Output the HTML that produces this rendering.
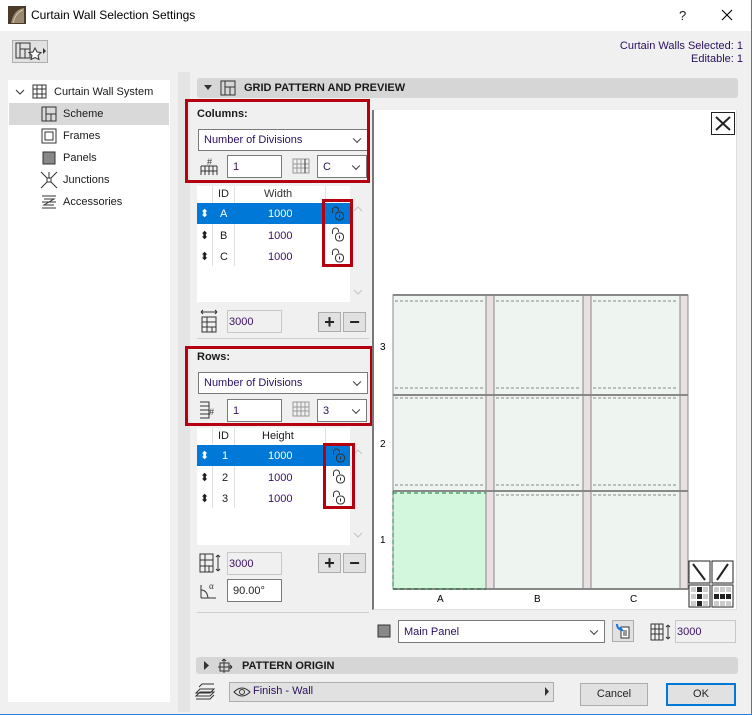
<!DOCTYPE html>
<html><head><meta charset="utf-8"><style>
*{box-sizing:border-box;margin:0;padding:0}
body{width:752px;height:715px;position:relative;overflow:hidden;background:#f0f0f0;font-family:"Liberation Sans",sans-serif;font-size:11px;color:#1a1a1a}
.a{position:absolute}
.tb{left:0;top:0;width:752px;height:31px;background:#fff}
.inp{position:absolute;background:#fff;border:1px solid #7a7a7a;padding:0 0 0 5px;display:flex;align-items:center;color:#3a1060}
.dd{position:absolute;background:#fff;border:1px solid #7a7a7a;padding-left:5px;display:flex;align-items:center;color:#2a1060}
.dd:after{content:"";position:absolute;right:7px;top:50%;width:5px;height:5px;border-right:1px solid #333;border-bottom:1px solid #333;transform:translateY(-70%) rotate(45deg)}
.red{position:absolute;border:3px solid #b5000f}
.gin{position:absolute;background:#f0f0f0;border:1px solid #c8c8c8;display:flex;align-items:center;padding-left:1px;color:#3a1060}
.btn{position:absolute;background:#e1e1e1;border:1px solid #adadad;display:flex;align-items:center;justify-content:center;font-size:18px;font-weight:bold;color:#222;line-height:1}
.row{position:absolute;left:197px;width:153px;height:21px;display:flex;align-items:center;font-size:11px}
.row span{position:absolute;text-align:center}
.hdr{position:absolute;background:#d6d6d6;border-radius:3px;font-weight:bold;font-size:11px;display:flex;align-items:center}
</style></head><body>
<div class="a tb"></div>
<svg class="a" style="left:8px;top:6px" width="18" height="18"><rect width="18" height="18" fill="#4a3b2a"/><path d="M3 17 Q6 3 16 2 L16 17Z" fill="#9a8870"/><path d="M5 17 Q8 6 15 4" stroke="#d0c4a8" fill="none"/></svg>
<div class="a" style="left:31px;top:8px;font-size:12px;color:#000">Curtain Wall Selection Settings</div>
<div class="a" style="left:679px;top:8px;font-size:13px">?</div>
<svg class="a" style="left:721px;top:9px" width="12" height="12"><path d="M1 1L11 11M11 1L1 11" stroke="#000" stroke-width="1.1"/></svg>
<div class="a" style="left:751px;top:0;width:1px;height:715px;background:#2b7fd6"></div>
<div class="a" style="left:0;top:714px;width:752px;height:1px;background:#2b7fd6"></div>

<div class="a" style="left:12px;top:40px;width:36px;height:23px;background:#e1e1e1;border:1px solid #adadad"></div>
<svg class="a" style="left:15px;top:42px" width="32" height="20"><rect x="1" y="1" width="14" height="15" fill="none" stroke="#333"/><path d="M5 1V16M5 7H15M10 7V16" stroke="#333" fill="none"/><path d="M20 6l2 4 4 .5-3 3 1 4-4-2-4 2 1-4-3-3 4-.5z" fill="#fff" stroke="#333"/><path d="M28 6l3 3-3 3z" fill="#333"/></svg>
<div class="a" style="right:9px;top:40px;text-align:right;line-height:13px;color:#2a1060">Curtain Walls Selected: 1<br>Editable: 1</div>

<div class="a" style="left:8px;top:80px;width:162px;height:622px;background:#fff"></div>
<svg class="a" style="left:15px;top:87px" width="10" height="10"><path d="M1 3l4 4 4-4" stroke="#333" fill="none"/></svg>
<svg class="a" style="left:31px;top:83px" width="17" height="17"><path d="M2 2H15V15H2Z M2 6H15M2 11H15M6 2V15M11 2V15" stroke="#333" fill="none"/></svg>
<div class="a" style="left:54px;top:86px;font-size:11px">Curtain Wall System</div>
<div class="a" style="left:9px;top:103px;width:160px;height:22px;background:#d9d9d9"></div>
<svg class="a" style="left:40px;top:105px" width="18" height="18"><rect x="2" y="2" width="14" height="14" fill="none" stroke="#333"/><path d="M6 2V16M6 9H16M11 9V16" stroke="#333"/></svg>
<div class="a" style="left:63px;top:108px">Scheme</div>
<svg class="a" style="left:40px;top:127px" width="18" height="18"><rect x="2" y="2" width="14" height="14" fill="none" stroke="#333"/><rect x="5" y="5" width="8" height="8" fill="none" stroke="#333"/></svg>
<div class="a" style="left:63px;top:130px">Frames</div>
<svg class="a" style="left:40px;top:149px" width="18" height="18"><rect x="3" y="3" width="12" height="12" fill="#888" stroke="#333"/></svg>
<div class="a" style="left:63px;top:152px">Panels</div>
<svg class="a" style="left:40px;top:171px" width="18" height="18"><rect x="7" y="7" width="4" height="4" fill="none" stroke="#333"/><path d="M1 1L7 7M17 1L11 7M1 17L7 11M17 17L11 11M9 1V7" stroke="#333"/></svg>
<div class="a" style="left:63px;top:174px">Junctions</div>
<svg class="a" style="left:40px;top:193px" width="18" height="18"><path d="M2 3H16M2 15H16M4 6L14 6L4 12H14M2 9H16" stroke="#333" fill="none"/></svg>
<div class="a" style="left:63px;top:196px">Accessories</div>

<div class="a" style="left:178px;top:72px;width:12px;height:640px;background:#e4e4e4"></div>

<div class="hdr" style="left:197px;top:78px;width:541px;height:20px"><svg style="margin-left:7px" width="9" height="8"><path d="M0 1h8l-4 5z" fill="#333"/></svg><svg style="margin-left:7px" width="16" height="16"><rect x="1" y="1" width="14" height="14" fill="none" stroke="#333"/><path d="M5 1V15M5 7H15M10 7V15" stroke="#333"/></svg><span style="margin-left:8px">GRID PATTERN AND PREVIEW</span></div>

<svg width="0" height="0" style="position:absolute"><defs><g id="lk" fill="none" stroke="#333"><path d="M2.5 8V5a3 3 0 0 1 6 0v1"/><rect x="5.5" y="7" width="8" height="8" rx="3.5"/><path d="M9.5 9.5V12.5"/></g></defs></svg>

<!-- columns -->
<div class="a" style="left:197px;top:108px;font-weight:bold">Columns:</div>
<div class="dd" style="left:198px;top:129px;width:170px;height:22px">Number of Divisions</div>
<svg class="a" style="left:199px;top:155px" width="20" height="22"><path d="M2 11H18M2 11V20M6 11V20M10 11V20M14 11V20M18 11V20M2 16H18" stroke="#333" fill="none"/><text x="8" y="10" font-size="9" font-family="Liberation Sans" fill="#333">#</text></svg>
<div class="inp" style="left:227px;top:155px;width:55px;height:23px">1</div>
<svg class="a" style="left:291px;top:157px" width="20" height="18"><path d="M2 2H18V16H2Z M2 7H18M2 11H18M6 2V16M10 2V16M14 2V16" stroke="#999" fill="none"/><path d="M14 2V16" stroke="#333"/></svg>
<div class="dd" style="left:317px;top:155px;width:50px;height:23px">C</div>
<div class="red" style="left:185px;top:99px;width:185px;height:84px"></div>

<div class="a" style="left:197px;top:186px;width:153px;height:116px;background:#fff"></div>
<div class="a" style="left:350px;top:186px;width:15px;height:116px;background:#f0f0f0"></div>
<svg class="a" style="left:353px;top:206px" width="10" height="90"><path d="M1 5l4-4 4 4M1 84l4 4 4-4" stroke="#c4c4c4" fill="none"/></svg>
<div class="a" style="left:212px;top:186px;width:1px;height:80px;background:#e0e0e0"></div>
<div class="a" style="left:234px;top:186px;width:1px;height:80px;background:#e0e0e0"></div>
<div class="a" style="left:325px;top:186px;width:1px;height:16px;background:#e0e0e0"></div>
<div class="a" style="left:218px;top:188px;color:#222">ID</div>
<div class="a" style="left:264px;top:188px;color:#333">Width</div>
<div class="row" style="top:203px;background:#0078d7;color:#fff"><span style="left:3px">⬍</span><span style="left:23px">A</span><span style="left:71px">1000</span></div>
<div class="row" style="top:225px"><span style="left:3px">⬍</span><span style="left:23px">B</span><span style="left:71px;color:#3a1060">1000</span></div>
<div class="row" style="top:246px"><span style="left:3px">⬍</span><span style="left:23px">C</span><span style="left:71px;color:#3a1060">1000</span></div>
<svg class="a" style="left:330px;top:205px" width="16" height="60"><use href="#lk"/><use href="#lk" y="21"/><use href="#lk" y="42"/></svg>
<div class="red" style="left:322px;top:199px;width:31px;height:68px"></div>
<svg class="a" style="left:199px;top:308px" width="20" height="26"><path d="M2 4H18M2 4l2-2M2 4l2 2M18 4l-2-2M18 4l-2 2" stroke="#333" fill="none"/><path d="M3 9H17V24H3Z M3 14H17M3 19H17M8 9V24M13 19V24" stroke="#333" fill="none"/></svg>
<div class="gin" style="left:227px;top:310px;width:55px;height:23px">3000</div>
<div class="btn" style="left:318px;top:312px;width:23px;height:20px">+</div>
<div class="btn" style="left:343px;top:312px;width:23px;height:20px">−</div>
<div class="a" style="left:197px;top:338px;width:172px;height:1px;background:#cfcfcf"></div>

<!-- rows -->
<div class="a" style="left:197px;top:351px;font-weight:bold">Rows:</div>
<div class="dd" style="left:198px;top:372px;width:170px;height:22px">Number of Divisions</div>
<svg class="a" style="left:198px;top:400px" width="22" height="20"><path d="M2 2H11V18H2 M2 6H11M2 10H11M2 14H11M11 2V18" stroke="#333" fill="none"/><text x="11" y="15" font-size="9" font-family="Liberation Sans" fill="#333">#</text></svg>
<div class="inp" style="left:227px;top:399px;width:55px;height:23px">1</div>
<svg class="a" style="left:291px;top:400px" width="20" height="18"><path d="M2 2H18V16H2Z M2 7H18M2 11H18M6 2V16M10 2V16M14 2V16" stroke="#999" fill="none"/></svg>
<div class="dd" style="left:317px;top:399px;width:50px;height:23px">3</div>
<div class="red" style="left:185px;top:346px;width:188px;height:80px"></div>

<div class="a" style="left:197px;top:428px;width:153px;height:117px;background:#fff"></div>
<div class="a" style="left:350px;top:428px;width:15px;height:117px;background:#f0f0f0"></div>
<svg class="a" style="left:353px;top:449px" width="10" height="90"><path d="M1 5l4-4 4 4M1 84l4 4 4-4" stroke="#c4c4c4" fill="none"/></svg>
<div class="a" style="left:212px;top:428px;width:1px;height:80px;background:#e0e0e0"></div>
<div class="a" style="left:234px;top:428px;width:1px;height:80px;background:#e0e0e0"></div>
<div class="a" style="left:325px;top:428px;width:1px;height:16px;background:#e0e0e0"></div>
<div class="a" style="left:218px;top:430px">ID</div>
<div class="a" style="left:262px;top:430px">Height</div>
<div class="row" style="top:445px;background:#0078d7;color:#fff"><span style="left:3px">⬍</span><span style="left:25px">1</span><span style="left:71px">1000</span></div>
<div class="row" style="top:467px"><span style="left:3px">⬍</span><span style="left:25px">2</span><span style="left:71px;color:#3a1060">1000</span></div>
<div class="row" style="top:488px"><span style="left:3px">⬍</span><span style="left:25px">3</span><span style="left:71px;color:#3a1060">1000</span></div>
<svg class="a" style="left:331px;top:447px" width="16" height="60"><use href="#lk"/><use href="#lk" y="21"/><use href="#lk" y="42"/></svg>
<div class="red" style="left:323px;top:443px;width:32px;height:66px"></div>
<svg class="a" style="left:198px;top:552px" width="26" height="22"><path d="M2 2H15V20H2Z M2 8H15M2 14H15M7 2V20M11 14V20" stroke="#333" fill="none"/><path d="M20 3V19M20 3l-2 2M20 3l2 2M20 19l-2-2M20 19l2-2" stroke="#333" fill="none"/></svg>
<div class="gin" style="left:227px;top:552px;width:55px;height:23px">3000</div>
<div class="btn" style="left:318px;top:553px;width:23px;height:20px">+</div>
<div class="btn" style="left:343px;top:553px;width:23px;height:20px">−</div>
<svg class="a" style="left:198px;top:580px" width="22" height="20"><path d="M3 18H18M3 18L3 5M3 10q6 0 7 8" stroke="#333" fill="none"/><text x="11" y="9" font-size="9" font-family="Liberation Serif" fill="#333">α</text></svg>
<div class="inp" style="left:227px;top:579px;width:55px;height:23px;color:#222">90.00°</div>
<div class="a" style="left:197px;top:612px;width:172px;height:1px;background:#cfcfcf"></div>

<!-- preview -->
<div class="a" style="left:372px;top:110px;width:365px;height:500px;background:#fff;border-left:2px solid #777;border-right:1px solid #ddd;border-bottom:1px solid #ddd"></div>
<div class="a" style="left:711px;top:112px;width:24px;height:23px;border:1px solid #222"></div>
<svg class="a" style="left:713px;top:114px" width="20" height="19"><path d="M3 3L17 16M17 3L3 16" stroke="#222" stroke-width="2"/></svg>
<svg class="a" style="left:375px;top:290px" width="362" height="320" font-family="Liberation Sans" font-size="10">
<g fill="#eef4f0" stroke="#888">
<rect x="18" y="5" width="93" height="100"/><rect x="119" y="5" width="89" height="100"/><rect x="216" y="5" width="89" height="100"/>
<rect x="18" y="105" width="93" height="96"/><rect x="119" y="105" width="89" height="96"/><rect x="216" y="105" width="89" height="96"/>
<rect x="18" y="201" width="93" height="98" fill="#d3f7dc"/><rect x="119" y="201" width="89" height="98"/><rect x="216" y="201" width="89" height="98"/>
</g>
<g fill="#e9e1e1" stroke="#888"><rect x="111" y="5" width="8" height="294"/><rect x="208" y="5" width="8" height="294"/><rect x="305" y="5" width="8" height="294"/></g>
<g stroke="#888" stroke-width="2"><path d="M18 5H313M18 105H313M18 201H313M18 299H313"/></g>
<g stroke="#888" stroke-dasharray="3,2" fill="none"><path d="M20 11H109M121 11H206M218 11H303M20 98H109M121 98H206M218 98H303M20 108H109M121 108H206M218 108H303M20 195H109M121 195H206M218 195H303M121 205H206M218 205H303M18 5V201"/></g>
<path d="M18 201V299H111M18 203H111" stroke="#1a7a3a" stroke-dasharray="4,3" fill="none"/>
<text x="5" y="60">3</text><text x="5" y="157">2</text><text x="5" y="253">1</text>
<text x="62" y="312">A</text><text x="159" y="312">B</text><text x="255" y="312">C</text>
<g stroke="#222" fill="#fff"><rect x="314" y="271" width="21" height="22"/><rect x="337" y="271" width="21" height="22"/><rect x="314" y="295" width="21" height="22"/><rect x="337" y="295" width="21" height="22"/></g>
<path d="M318 274L330 290M353 274L342 290" stroke="#222" stroke-width="2"/>
<g fill="#ccc"><rect x="316" y="297" width="5" height="5"/><rect x="328" y="297" width="5" height="5"/><rect x="316" y="304" width="5" height="5"/><rect x="328" y="304" width="5" height="5"/><rect x="316" y="311" width="5" height="5"/><rect x="328" y="311" width="5" height="5"/><rect x="339" y="297" width="5" height="5"/><rect x="345" y="297" width="5" height="5"/><rect x="351" y="297" width="5" height="5"/><rect x="339" y="311" width="5" height="5"/><rect x="345" y="311" width="5" height="5"/><rect x="351" y="311" width="5" height="5"/></g>
<g fill="#222"><rect x="322" y="297" width="5" height="5"/><rect x="322" y="304" width="5" height="5"/><rect x="322" y="311" width="5" height="5"/><rect x="339" y="304" width="5" height="5"/><rect x="345" y="304" width="5" height="5"/><rect x="351" y="304" width="5" height="5"/></g>
</svg>

<svg class="a" style="left:376px;top:623px" width="16" height="16"><rect x="2" y="2" width="12" height="12" fill="#888" stroke="#333"/></svg>
<div class="dd" style="left:398px;top:620px;width:207px;height:23px">Main Panel</div>
<div class="a" style="left:612px;top:620px;width:22px;height:22px;background:#e1e1e1;border:1px solid #adadad"></div>
<svg class="a" style="left:614px;top:622px" width="18" height="18"><rect x="7" y="5" width="8" height="11" fill="#fff" stroke="#333"/><path d="M9 9H13M9 11H13M9 13H13" stroke="#333"/><path d="M3 2q0 5 5 6l-2-3" stroke="#1e7ad8" stroke-width="2" fill="none"/></svg>
<svg class="a" style="left:649px;top:622px" width="24" height="20"><path d="M2 2H14V18H2Z M2 7H14M2 12H14M6 2V18M10 2V18" stroke="#333" fill="none"/><path d="M19 3V17M19 3l-2 2M19 3l2 2M19 17l-2-2M19 17l2-2" stroke="#333" fill="none"/></svg>
<div class="gin" style="left:675px;top:620px;width:61px;height:23px">3000</div>

<div class="hdr" style="left:196px;top:657px;width:542px;height:17px"><svg style="margin-left:8px" width="6" height="9"><path d="M0 0l5 4.5L0 9z" fill="#333"/></svg><svg style="margin-left:7px" width="16" height="16"><rect x="3" y="5" width="9" height="8" fill="none" stroke="#333"/><path d="M7 1V15M1 9H15M7 1l-2 2M7 1l2 2M15 9l-2-2M15 9l-2 2" stroke="#333" fill="none"/></svg><span style="margin-left:9px">PATTERN ORIGIN</span></div>

<svg class="a" style="left:194px;top:682px" width="22" height="20"><path d="M2 14l4-4h14l-4 4Z M2 17h14l4-4M2 11l4-4h14l-4 4H2Z M5 5l3-3h12" stroke="#333" fill="none"/></svg>
<div class="a" style="left:229px;top:682px;width:325px;height:20px;background:#e1e1e1;border:1px solid #adadad"></div>
<svg class="a" style="left:233px;top:686px" width="18" height="12"><path d="M1 6q8-8 16 0q-8 8-16 0Z" fill="none" stroke="#333"/><circle cx="9" cy="6" r="2.5" fill="none" stroke="#333"/></svg>
<div class="a" style="left:253px;top:685px;color:#2a1060">Finish - Wall</div>
<svg class="a" style="left:545px;top:687px" width="5" height="9"><path d="M0 0l4 4.5L0 9z" fill="#333"/></svg>
<div class="btn" style="left:580px;top:683px;width:68px;height:23px;font-size:11px;font-weight:normal">Cancel</div>
<div class="btn" style="left:666px;top:683px;width:70px;height:23px;font-size:11px;font-weight:normal;border:2px solid #0078d7">OK</div>
</body></html>
